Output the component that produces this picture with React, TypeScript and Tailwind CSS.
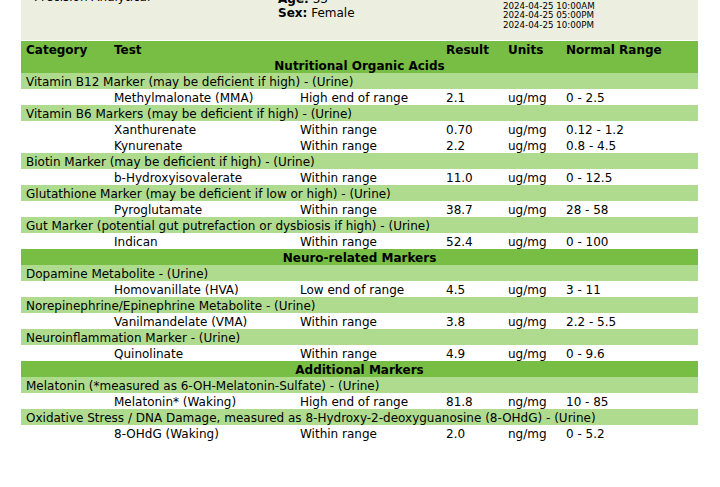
import React from "react";

type Row =
  | { kind: "section"; title: string }
  | { kind: "cat"; title: string }
  | { kind: "data"; test: string; status: string; result: string; units: string; range: string };

const rows: Row[] = [
  { kind: "section", title: "Nutritional Organic Acids" },
  { kind: "cat", title: "Vitamin B12 Marker (may be deficient if high) - (Urine)" },
  { kind: "data", test: "Methylmalonate (MMA)", status: "High end of range", result: "2.1", units: "ug/mg", range: "0 - 2.5" },
  { kind: "cat", title: "Vitamin B6 Markers (may be deficient if high) - (Urine)" },
  { kind: "data", test: "Xanthurenate", status: "Within range", result: "0.70", units: "ug/mg", range: "0.12 - 1.2" },
  { kind: "data", test: "Kynurenate", status: "Within range", result: "2.2", units: "ug/mg", range: "0.8 - 4.5" },
  { kind: "cat", title: "Biotin Marker (may be deficient if high) - (Urine)" },
  { kind: "data", test: "b-Hydroxyisovalerate", status: "Within range", result: "11.0", units: "ug/mg", range: "0 - 12.5" },
  { kind: "cat", title: "Glutathione Marker (may be deficient if low or high) - (Urine)" },
  { kind: "data", test: "Pyroglutamate", status: "Within range", result: "38.7", units: "ug/mg", range: "28 - 58" },
  { kind: "cat", title: "Gut Marker (potential gut putrefaction or dysbiosis if high) - (Urine)" },
  { kind: "data", test: "Indican", status: "Within range", result: "52.4", units: "ug/mg", range: "0 - 100" },
  { kind: "section", title: "Neuro-related Markers" },
  { kind: "cat", title: "Dopamine Metabolite - (Urine)" },
  { kind: "data", test: "Homovanillate (HVA)", status: "Low end of range", result: "4.5", units: "ug/mg", range: "3 - 11" },
  { kind: "cat", title: "Norepinephrine/Epinephrine Metabolite - (Urine)" },
  { kind: "data", test: "Vanilmandelate (VMA)", status: "Within range", result: "3.8", units: "ug/mg", range: "2.2 - 5.5" },
  { kind: "cat", title: "Neuroinflammation Marker - (Urine)" },
  { kind: "data", test: "Quinolinate", status: "Within range", result: "4.9", units: "ug/mg", range: "0 - 9.6" },
  { kind: "section", title: "Additional Markers" },
  { kind: "cat", title: "Melatonin (*measured as 6-OH-Melatonin-Sulfate) - (Urine)" },
  { kind: "data", test: "Melatonin* (Waking)", status: "High end of range", result: "81.8", units: "ng/mg", range: "10 - 85" },
  { kind: "cat", title: "Oxidative Stress / DNA Damage, measured as 8-Hydroxy-2-deoxyguanosine (8-OHdG) - (Urine)" },
  { kind: "data", test: "8-OHdG (Waking)", status: "Within range", result: "2.0", units: "ng/mg", range: "0 - 5.2" },
];

const cols = "grid grid-cols-[88px_186px_146px_62px_58px_1fr]";

export default function App() {
  return (
    <div
      className="w-[720px] h-[487px] overflow-hidden bg-white text-black text-[12px] leading-[16px]"
      style={{ fontFamily: '"DejaVu Sans", Verdana, sans-serif' }}
    >
      <div className="mx-[21px] w-[677px]">
        <div className="-mt-[30px] h-[70px] bg-[#eceee0] flex items-start">
          <div className="w-[257px] pl-[13px] pt-[6px] leading-[14px]">
            <div>Sample Lab Report</div>
            <div>Precision Analytical</div>
          </div>
          <div className="w-[225px] pt-[22px] leading-[14px]">
            <div>
              <span className="font-bold">Age:</span> 33
            </div>
            <div>
              <span className="font-bold">Sex:</span> Female
            </div>
          </div>
          <div className="pt-[22px] text-[8.7px] leading-[9.5px]">
            <div>2024-04-25 06:00AM</div>
            <div>2024-04-25 10:00AM</div>
            <div>2024-04-25 05:00PM</div>
            <div>2024-04-25 10:00PM</div>
          </div>
        </div>

        <div className="mt-[1px] leading-[16px]">
          <div className={`${cols} h-[16px] pt-[1px] bg-[#78be44] font-bold`}>
            <div className="pl-[5px]">Category</div>
            <div className="pl-[5px]">Test</div>
            <div />
            <div className="pl-[5px]">Result</div>
            <div className="pl-[5px]">Units</div>
            <div className="pl-[5px]">Normal Range</div>
          </div>
          {rows.map((r, i) => {
            if (r.kind === "section")
              return (
                <div key={i} className="h-[16px] pt-[1px] bg-[#78be44] font-bold text-center">
                  {r.title}
                </div>
              );
            if (r.kind === "cat")
              return (
                <div key={i} className="h-[16px] pt-[1px] bg-[#afdb8f] pl-[5px] whitespace-nowrap">
                  {r.title}
                </div>
              );
            return (
              <div key={i} className={`${cols} h-[16px] pt-[1px] bg-white whitespace-nowrap`}>
                <div />
                <div className="pl-[5px]">{r.test}</div>
                <div className="pl-[5px]">{r.status}</div>
                <div className="pl-[5px]">{r.result}</div>
                <div className="pl-[5px]">{r.units}</div>
                <div className="pl-[5px]">{r.range}</div>
              </div>
            );
          })}
        </div>
      </div>
    </div>
  );
}
